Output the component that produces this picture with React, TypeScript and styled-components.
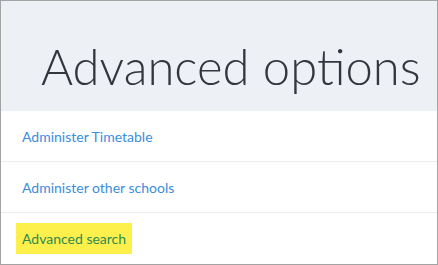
import styled, { createGlobalStyle } from 'styled-components';

const GlobalStyle = createGlobalStyle`
  body {
    margin: 0;
    font-family: Lato, "Open Sans", sans-serif;
    background: #fff;
  }
`;

const Panel = styled.div`
  box-sizing: border-box;
  width: 438px;
  height: 265px;
  border: 1px solid #a3a3a3;
  display: flex;
  flex-direction: column;
  overflow: hidden;
`;

const Header = styled.div`
  box-sizing: border-box;
  height: 110px;
  padding: 41px 0 0 40px;
  background: #edf1f5;
`;

const Title = styled.h1`
  margin: 0;
  font-family: Lato, sans-serif;
  font-weight: 300;
  font-size: 49px;
  line-height: 48px;
  color: #33373d;
  white-space: nowrap;
`;

const List = styled.div`
  display: flex;
  flex-direction: column;
`;

const Row = styled.div<{ $last?: boolean }>`
  box-sizing: border-box;
  height: 51px;
  display: flex;
  align-items: center;
  padding-left: 15px;
  border-bottom: ${(p) => (p.$last ? 'none' : '1px solid #e9edf1')};
`;

const Link = styled.a<{ $highlight?: boolean }>`
  display: inline-block;
  padding: 0 6px;
  line-height: 31px;
  font-size: 14px;
  text-decoration: none;
  cursor: pointer;
  color: ${(p) => (p.$highlight ? '#2f8a4f' : '#3b8de0')};
  background: ${(p) => (p.$highlight ? '#fdf04d' : 'transparent')};
`;

const links = ['Administer Timetable', 'Administer other schools', 'Advanced search'];

export default function App() {
  return (
    <>
      <GlobalStyle />
      <Panel>
        <Header>
          <Title>Advanced options</Title>
        </Header>
        <List>
          {links.map((label, i) => (
            <Row key={label} $last={i === links.length - 1}>
              <Link $highlight={i === links.length - 1}>{label}</Link>
            </Row>
          ))}
        </List>
      </Panel>
    </>
  );
}
